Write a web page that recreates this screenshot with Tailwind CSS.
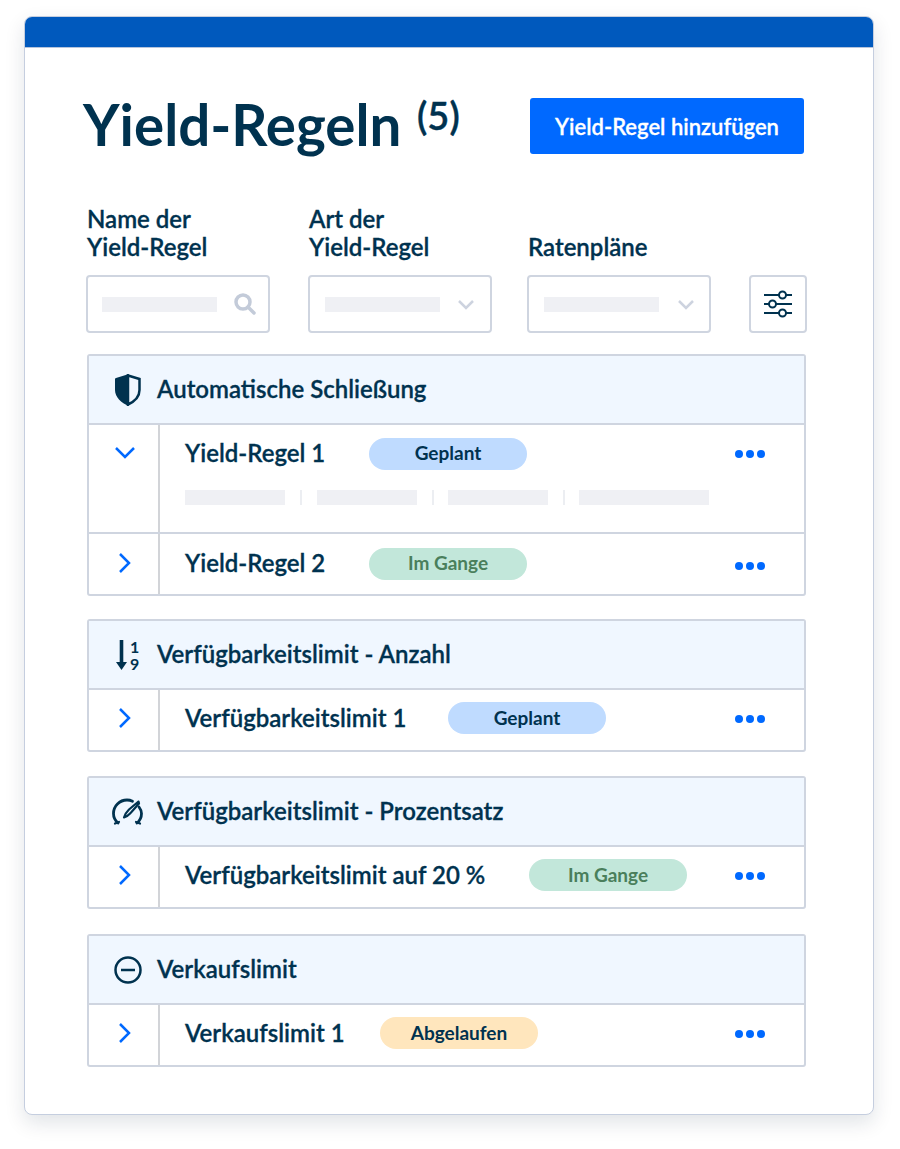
<!DOCTYPE html>
<html lang="de">
<head>
  <meta charset="UTF-8">
  <title>Yield-Regeln</title>
  <script src="https://cdn.jsdelivr.net/npm/@tailwindcss/browser@4"></script>
</head>
<body class="bg-white w-[900px] h-[1149px] overflow-hidden font-['Lato',sans-serif] text-[#00324f]">
  <div class="ml-6 mt-4 w-[850px] h-[1099px] bg-white rounded-lg border border-[#c5cedf] shadow-[0_8px_20px_rgba(0,30,60,0.12)] overflow-hidden">
    <div class="h-[31px] bg-[#0059bd] border-b border-[#b5c4dc]"></div>
    <div class="pl-[62px] pr-[66px]">
      <div class="flex items-start mt-[38px] h-[114px]">
        <h1 class="w-[443px] -ml-[4px] text-[56.500px] leading-[76px] font-bold whitespace-nowrap">Yield-Regeln <sup class="text-[38px] font-semibold align-[-3px] leading-none ml-[2px] [-webkit-text-stroke:0.4px]">(5)</sup></h1>
        <button class="mt-[12px] ml-[4px] w-[274px] h-[56px] bg-[#0069ff] rounded-[3px] text-white text-[22px] font-semibold [-webkit-text-stroke:0.3px]">Yield-Regel hinzufügen</button>
      </div>
      <div class="flex items-end h-[61px] text-[24px] leading-[28px] font-semibold [-webkit-text-stroke:0.3px]">
        <div class="w-[222px]">Name der<br>Yield-Regel</div>
        <div class="w-[219px]">Art der<br>Yield-Regel</div>
        <div>Ratenpläne</div>
      </div>
      <div class="flex mt-[14px] -ml-[1px] h-[58px]">
        <div class="w-[184px] border-2 border-[#cfd5e0] rounded-[4px] flex items-center pl-[14px] pr-[12px] justify-between">
          <span class="w-[115px] h-[15px] bg-[#eff0f4]"></span>
          <svg width="22" height="22" viewBox="0 0 22 22" fill="none" stroke="#c3cbd9" stroke-width="3.500"><circle cx="9" cy="9" r="7"/><path d="M14 14l6 6" stroke-linecap="round"/></svg>
        </div>
        <div class="w-[184px] ml-[38.500px] border-2 border-[#cfd5e0] rounded-[4px] flex items-center pl-[14.500px] pr-[14.500px] justify-between">
          <span class="w-[115px] h-[15px] bg-[#eff0f4]"></span>
          <svg width="18" height="11" viewBox="0 0 18 11" fill="none" stroke="#cdd3df" stroke-width="2.500"><path d="M2 2l7 7 7-7"/></svg>
        </div>
        <div class="w-[184px] ml-[35.500px] border-2 border-[#cfd5e0] rounded-[4px] flex items-center pl-[15px] pr-[14px] justify-between">
          <span class="w-[115px] h-[15px] bg-[#eff0f4]"></span>
          <svg width="18" height="11" viewBox="0 0 18 11" fill="none" stroke="#cdd3df" stroke-width="2.500"><path d="M2 2l7 7 7-7"/></svg>
        </div>
        <div class="w-[58px] ml-[38px] border-2 border-[#cfd5e0] rounded-[4px] flex items-center justify-center">
          <svg width="28" height="28" viewBox="0 0 28 28" fill="none" stroke="#00324f" stroke-width="2"><path d="M0 5h15M22 5h6M0 14h5M12 14h16M0 23h15M22 23h6"/><circle cx="18.500" cy="5" r="3.500"/><circle cx="8.500" cy="14" r="3.500"/><circle cx="18.500" cy="23" r="3.500"/></svg>
        </div>
      </div>

      <div class="mt-[21px] w-[719px] border-2 border-[#cfd5e0] rounded-[3px]">
        <div class="h-[69px] bg-[#f0f7ff] border-b-2 border-[#cfd5e0] flex items-center">
          <span class="w-[68px] flex justify-center pl-[10px]"><svg width="26" height="32" viewBox="0 0 26 32"><path d="M13 1.500L24.500 5v11c0 6.500-5 11.500-11.500 14.500z" fill="none" stroke="#00324f" stroke-width="2.500"/><path d="M14 0L1 4c-1 .3-1 1-1 1.500V16c0 7 6 13 14 16z" fill="#00324f"/></svg></span>
          <span class="-mt-[2px] text-[24px] font-semibold [-webkit-text-stroke:0.3px]">Automatische Schließung</span>
        </div>
        <div class="flex h-[109px] border-b-2 border-[#cfd5e0]">
          <div class="w-[71px] border-r-2 border-[#d2d4d8] flex justify-center pt-[22px] pl-[3px]">
            <svg width="20" height="12" viewBox="0 0 20 12" fill="none" stroke="#0069ff" stroke-width="2.500"><path d="M1 1l9 9 9-9"/></svg>
          </div>
          <div class="flex-1">
            <div class="flex items-center h-[56px] mt-px pl-[25px] pr-[39px]">
              <span class="w-[184px] -mt-[2px] text-[24px] font-semibold [-webkit-text-stroke:0.3px]">Yield-Regel 1</span>
              <span class="w-[158px] h-[32px] pb-[2px] rounded-full bg-[#bfdbff] flex items-center justify-center text-[19px] font-bold">Geplant</span>
              <span class="ml-auto flex gap-[3px]"><i class="w-[8px] h-[8px] rounded-full bg-[#0069ff]"></i><i class="w-[8px] h-[8px] rounded-full bg-[#0069ff]"></i><i class="w-[8px] h-[8px] rounded-full bg-[#0069ff]"></i></span>
            </div>
            <div class="flex items-center pl-[25px] mt-[8px]">
              <span class="w-[100px] h-[15px] bg-[#eff0f4]"></span>
              <span class="w-[2px] h-[15px] bg-[#eceef2] mx-[15px]"></span>
              <span class="w-[100px] h-[15px] bg-[#eff0f4]"></span>
              <span class="w-[2px] h-[15px] bg-[#eceef2] mx-[14.500px]"></span>
              <span class="w-[100px] h-[15px] bg-[#eff0f4]"></span>
              <span class="w-[2px] h-[15px] bg-[#eceef2] mx-[14.500px]"></span>
              <span class="w-[130px] h-[15px] bg-[#eff0f4]"></span>
            </div>
          </div>
        </div>
        <div class="flex h-[60px]">
          <div class="w-[71px] border-r-2 border-[#d2d4d8] flex items-center justify-center pl-[3px] pb-[2px]">
            <svg width="12" height="20" viewBox="0 0 12 20" fill="none" stroke="#0069ff" stroke-width="2.500"><path d="M1 1l9 9-9 9"/></svg>
          </div>
          <div class="flex-1 flex items-center pl-[25px] pr-[39px]">
            <span class="w-[184px] -mt-[2px] text-[24px] font-semibold [-webkit-text-stroke:0.3px]">Yield-Regel 2</span>
            <span class="w-[158px] h-[32px] pb-[2px] rounded-full bg-[#c2e7da] flex items-center justify-center text-[19px] font-bold text-[#4a7f5c]">Im Gange</span>
            <span class="ml-auto flex gap-[3px] mt-[4px]"><i class="w-[8px] h-[8px] rounded-full bg-[#0069ff]"></i><i class="w-[8px] h-[8px] rounded-full bg-[#0069ff]"></i><i class="w-[8px] h-[8px] rounded-full bg-[#0069ff]"></i></span>
          </div>
        </div>
      </div>

      <div class="mt-[23px] w-[719px] border-2 border-[#cfd5e0] rounded-[3px]">
        <div class="h-[69px] bg-[#f0f7ff] border-b-2 border-[#cfd5e0] flex items-center">
          <span class="w-[68px] flex justify-center pl-[10px]">
            <span class="flex items-center gap-[3px] w-[24px]">
              <svg width="11" height="30" viewBox="0 0 11 30" class="shrink-0"><path d="M3.700 0h3.600v22H11l-5.500 8L0 22h3.700z" fill="#00324f"/></svg>
              <span class="flex flex-col text-[16px] leading-[17px] font-bold [font-variant-numeric:lining-nums]"><span>1</span><span>9</span></span>
            </span>
          </span>
          <span class="-mt-[2px] text-[24px] font-semibold [-webkit-text-stroke:0.3px]">Verfügbarkeitslimit - Anzahl</span>
        </div>
        <div class="flex h-[60px] pb-[4px]">
          <div class="w-[71px] -mb-[4px] border-r-2 border-[#d2d4d8] flex items-center justify-center pl-[3px] pb-[4px]">
            <svg width="12" height="20" viewBox="0 0 12 20" fill="none" stroke="#0069ff" stroke-width="2.500"><path d="M1 1l9 9-9 9"/></svg>
          </div>
          <div class="flex-1 flex items-center pl-[25px] pr-[39px]">
            <span class="w-[263px] text-[24px] font-semibold [-webkit-text-stroke:0.3px]">Verfügbarkeitslimit 1</span>
            <span class="w-[158px] h-[32px] rounded-full bg-[#bfdbff] flex items-center justify-center text-[19px] font-bold">Geplant</span>
            <span class="ml-auto flex gap-[3px] mt-[2px]"><i class="w-[8px] h-[8px] rounded-full bg-[#0069ff]"></i><i class="w-[8px] h-[8px] rounded-full bg-[#0069ff]"></i><i class="w-[8px] h-[8px] rounded-full bg-[#0069ff]"></i></span>
          </div>
        </div>
      </div>

      <div class="mt-[24px] w-[719px] border-2 border-[#cfd5e0] rounded-[3px]">
        <div class="h-[69px] bg-[#f0f7ff] border-b-2 border-[#cfd5e0] flex items-center">
          <span class="w-[68px] flex justify-center pl-[8px]"><svg width="31" height="28" viewBox="0 0 31 28" fill="none" stroke="#00324f" stroke-width="2.800" stroke-linecap="round"><path d="M6 25C2.500 22 1.500 18.500 1.500 15.500 1.500 8 7.500 2 15 2c2 0 4 .5 5.500 1.200"/><path d="M27 9c1.500 2 2.500 4 2.500 6.500 0 3.500-1.500 7-4.500 9.500"/><path d="M3 25.500l4-1.500M24 24l4 1.500" stroke-width="2.200"/><path d="M26.500 3.500L17 11.500c-1.500 1.500-4 4-5 8 3.500-1 5.500-3.500 7-5l8-9z" stroke-width="2.200" stroke-linejoin="round"/></svg></span>
          <span class="-mt-[2px] text-[24px] font-semibold [-webkit-text-stroke:0.3px]">Verfügbarkeitslimit - Prozentsatz</span>
        </div>
        <div class="flex h-[60px] pb-[4px]">
          <div class="w-[71px] -mb-[4px] border-r-2 border-[#d2d4d8] flex items-center justify-center pl-[3px] pb-[4px]">
            <svg width="12" height="20" viewBox="0 0 12 20" fill="none" stroke="#0069ff" stroke-width="2.500"><path d="M1 1l9 9-9 9"/></svg>
          </div>
          <div class="flex-1 flex items-center pl-[25px] pr-[39px]">
            <span class="w-[344px] text-[24px] font-semibold [-webkit-text-stroke:0.3px]">Verfügbarkeitslimit auf 20 %</span>
            <span class="w-[158px] h-[32px] rounded-full bg-[#c2e7da] flex items-center justify-center text-[19px] font-bold text-[#4a7f5c]">Im Gange</span>
            <span class="ml-auto flex gap-[3px] mt-[2px]"><i class="w-[8px] h-[8px] rounded-full bg-[#0069ff]"></i><i class="w-[8px] h-[8px] rounded-full bg-[#0069ff]"></i><i class="w-[8px] h-[8px] rounded-full bg-[#0069ff]"></i></span>
          </div>
        </div>
      </div>

      <div class="mt-[25px] w-[719px] border-2 border-[#cfd5e0] rounded-[3px]">
        <div class="h-[69px] bg-[#f0f7ff] border-b-2 border-[#cfd5e0] flex items-center">
          <span class="w-[68px] flex justify-center pl-[10px]"><svg width="28" height="28" viewBox="0 0 28 28" fill="none" stroke="#00324f" stroke-width="2.500"><circle cx="14" cy="14" r="12.500"/><path d="M7 14h14"/></svg></span>
          <span class="-mt-[2px] text-[24px] font-semibold [-webkit-text-stroke:0.3px]">Verkaufslimit</span>
        </div>
        <div class="flex h-[60px] pb-[4px]">
          <div class="w-[71px] -mb-[4px] border-r-2 border-[#d2d4d8] flex items-center justify-center pl-[3px] pb-[4px]">
            <svg width="12" height="20" viewBox="0 0 12 20" fill="none" stroke="#0069ff" stroke-width="2.500"><path d="M1 1l9 9-9 9"/></svg>
          </div>
          <div class="flex-1 flex items-center pl-[25px] pr-[39px]">
            <span class="w-[195px] text-[24px] font-semibold [-webkit-text-stroke:0.3px]">Verkaufslimit 1</span>
            <span class="w-[158px] h-[32px] rounded-full bg-[#ffe6bd] flex items-center justify-center text-[19px] font-bold">Abgelaufen</span>
            <span class="ml-auto flex gap-[3px] mt-[2px]"><i class="w-[8px] h-[8px] rounded-full bg-[#0069ff]"></i><i class="w-[8px] h-[8px] rounded-full bg-[#0069ff]"></i><i class="w-[8px] h-[8px] rounded-full bg-[#0069ff]"></i></span>
          </div>
        </div>
      </div>
    </div>
  </div>
</body>
</html>
